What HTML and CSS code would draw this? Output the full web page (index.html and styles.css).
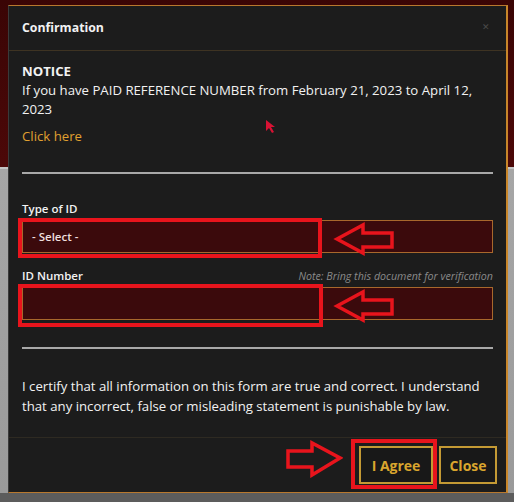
FILE: index.html
```html
<!DOCTYPE html>
<html>
<head>
<meta charset="utf-8">
<link rel="stylesheet" href="styles.css">
</head>
<body>
<div class="backdrop">
  <div class="modal">
    <div class="modal-header">
      <span class="modal-title">Confirmation</span>
      <span class="modal-x">&#x2715;</span>
    </div>
    <div class="modal-body">
      <div class="notice">
        <div class="notice-title">NOTICE</div>
        <div>If you have PAID REFERENCE NUMBER from February 21, 2023 to April 12, 2023</div>
      </div>
      <a class="click-here">Click here</a>
      <hr class="sep sep-top">
      <div class="field">
        <div class="field-label">Type of ID</div>
        <div class="select">- Select -</div>
      </div>
      <div class="field field-2">
        <div class="field-label-row">
          <span class="field-label">ID Number</span>
          <span class="note">Note: Bring this document for verification</span>
        </div>
        <div class="input"></div>
      </div>
      <hr class="sep sep-bottom">
      <p class="certify">I certify that all information on this form are true and correct. I understand that any incorrect, false or misleading statement is punishable by law.</p>
    </div>
    <div class="modal-footer">
      <button class="btn btn-agree">I Agree</button>
      <button class="btn btn-close">Close</button>
    </div>
  </div>

  <div class="mark mark-box box-1"></div>
  <div class="mark mark-box box-2"></div>
  <div class="mark mark-box box-3"></div>
  <svg class="mark arrow arrow-1" width="62" height="34" viewBox="-3 -3 62 34"><polygon points="1,14 27,0 27,8 56,8 56,22 27,22 27,28" fill="none" stroke="#e8141c" stroke-width="3.5"/></svg>
  <svg class="mark arrow arrow-2" width="62" height="34" viewBox="-3 -3 62 34"><polygon points="1,14 27,0 27,8 56,8 56,22 27,22 27,28" fill="none" stroke="#e8141c" stroke-width="3.5"/></svg>
  <svg class="mark arrow arrow-3" width="58" height="38" viewBox="-3 -3 58 38"><polygon points="0,8 24,8 24,0 52,15 24,32 24,24 0,24" fill="none" stroke="#e8141c" stroke-width="3.5"/></svg>
  <svg class="mark cursor" width="12" height="15" viewBox="0 0 12 15"><polygon points="1,1 1,12 4,9 7,14 9,13 6,8 10,8" fill="#d81234"/></svg>
</div>
</body>
</html>
```

FILE: styles.css
```css
html, body {
  margin: 0;
  padding: 0;
}
body {
  width: 514px;
  height: 502px;
  overflow: hidden;
  background: linear-gradient(to bottom, #3a0505 0, #4c0808 167px, #c4c4c4 167px, #c4c4c4 169px, #a6a6a6 169px, #9a9a9a 493px, #5c5c5c 493px);
  font-family: "Open Sans", "Liberation Sans", sans-serif;
}
.backdrop {
  position: relative;
  padding: 5px 6px 0 8px;
}
.modal {
  width: 497px;
  height: 486px;
  background: #1c1c1c;
  border: 1px solid #b8782e;
  border-right-width: 2px;
  border-right-color: #c8862a;
  border-left-color: #3a3a3a;
  display: flex;
  flex-direction: column;
  color: #f2f2f2;
}
.modal-header {
  height: 44px;
  border-bottom: 1px solid #3e3322;
  display: flex;
  align-items: center;
  justify-content: space-between;
  padding: 0 16px 0 13px;
}
.modal-title {
  font-weight: 700;
  font-size: 12.3px;
  color: #f2f2f2;
  margin-top: -1px;
}
.modal-x {
  font-size: 9px;
  color: #4a4a4a;
  margin-top: -4px;
}
.modal-body {
  padding: 11px 13px 0 13px;
  font-size: 13.2px;
  line-height: 19px;
  flex: 1;
}
.notice-title {
  font-weight: 700;
}
.click-here {
  display: block;
  margin-top: 8px;
  color: #e0a030;
}
.sep {
  border: 0;
  height: 2px;
  background: #a8a8a8;
  margin: 0;
}
.sep-top {
  margin-top: 26px;
}
.field {
  margin-top: 25px;
}
.field-2 {
  margin-top: 13px;
}
.field-label {
  font-weight: 600;
  font-size: 11.5px;
  color: #f2f2f2;
}
.field-label-row {
  display: flex;
  justify-content: space-between;
  align-items: baseline;
}
.note {
  font-style: italic;
  font-size: 10.7px;
  color: #8a8a8a;
}
.select, .input {
  margin-top: 2px;
  height: 31px;
  background: #3b0a0c;
  border: 1px solid #a8682c;
  box-sizing: content-box;
}
.select {
  display: flex;
  align-items: center;
  padding-left: 9px;
  font-size: 11.5px;
  font-weight: 600;
  color: #eedede;
}
.input {
  margin-top: 1px;
}
.sep-bottom {
  margin-top: 27px;
}
.certify {
  margin: 27px 0 0;
  line-height: 20px;
  font-size: 13.2px;
}
.modal-footer {
  height: 55px;
  border-top: 1px solid #2e2a22;
  display: flex;
  justify-content: flex-end;
  align-items: flex-start;
  gap: 6px;
  padding: 8px 9px 0 0;
  box-sizing: border-box;
}
.btn {
  height: 38px;
  background: #181818;
  border: 2px solid #c49a34;
  color: #d9a52e;
  font-family: "Open Sans", "Liberation Sans", sans-serif;
  font-weight: 700;
  font-size: 14px;
  padding: 0;
}
.btn-agree {
  width: 74px;
}
.btn-close {
  width: 58px;
}
.mark {
  position: absolute;
}
.mark-box {
  border: 4px solid #e8141c;
  box-sizing: border-box;
}
.box-1 {
  left: 18px;
  top: 218px;
  width: 304px;
  height: 40px;
}
.box-2 {
  left: 18px;
  top: 284px;
  width: 305px;
  height: 43px;
}
.box-3 {
  left: 351px;
  top: 439px;
  width: 86px;
  height: 50px;
}
.arrow-1 {
  left: 333px;
  top: 222px;
}
.arrow-2 {
  left: 333px;
  top: 289px;
}
.arrow-3 {
  left: 285px;
  top: 440px;
}
.cursor {
  left: 265px;
  top: 119px;
}
```
